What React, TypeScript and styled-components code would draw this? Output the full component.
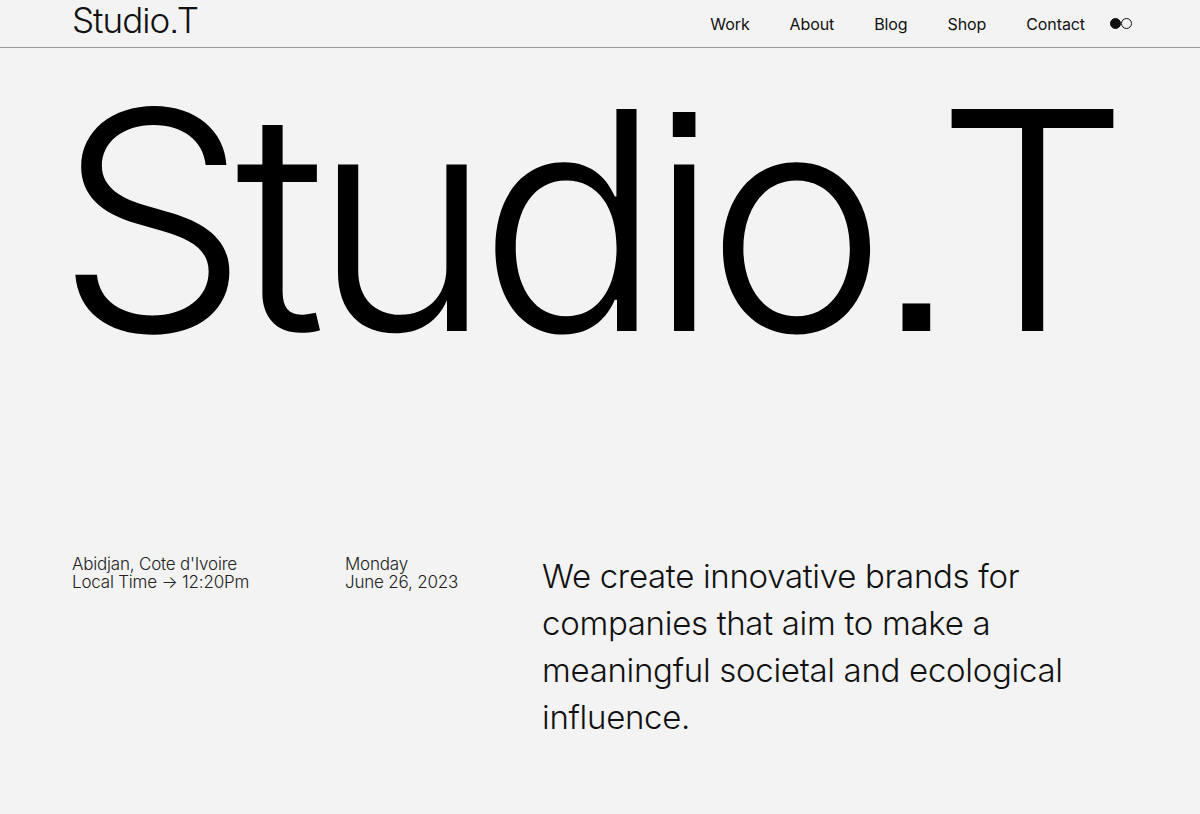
import { createGlobalStyle } from 'styled-components';
import styled from 'styled-components';

const GlobalStyle = createGlobalStyle`
  html, body {
    margin: 0;
    padding: 0;
    background: #f3f3f3;
    color: #0d0d0d;
    font-family: Inter, 'Liberation Sans', sans-serif;
  }
`;

const Page = styled.div`
  min-height: 814px;
  background: #f3f3f3;
`;

const Header = styled.header`
  display: flex;
  align-items: center;
  justify-content: space-between;
  height: 47px;
  padding: 0 68px 0 72px;
  border-bottom: 1px solid #9a9a9a;
`;

const Logo = styled.a`
  align-self: flex-start;
  padding-top: 5px;
  font-size: 35px;
  font-weight: 300;
  letter-spacing: -1px;
  line-height: 30px;
  color: #111;
  text-decoration: none;
  font-feature-settings: 'ss07';
`;

const Nav = styled.nav`
  display: flex;
  align-items: center;
  gap: 40px;
`;

const NavLink = styled.a`
  font-size: 16px;
  color: #111;
  text-decoration: none;
  letter-spacing: -0.1px;
`;

const Toggle = styled.span`
  display: flex;
  align-items: center;
  margin-left: -15px;
`;

const Dot = styled.span<{ $filled?: boolean }>`
  width: 11px;
  height: 11px;
  border-radius: 50%;
  box-sizing: border-box;
  border: 1.3px solid #111;
  background: ${(p) => (p.$filled ? '#111' : 'transparent')};
`;

const Hero = styled.h1`
  margin: 0;
  padding: 20px 0 0 56px;
  font-size: 305px;
  font-weight: 300;
  letter-spacing: -13.6px;
  line-height: 1;
  color: #000;
  white-space: nowrap;
  font-feature-settings: 'ss07';
`;

const Info = styled.section`
  display: grid;
  grid-template-columns: 273px 197px 1fr;
  padding: 182px 72px 0;
`;

const Meta = styled.p`
  margin: 0;
  font-size: 17px;
  font-weight: 300;
  line-height: 18px;
  color: #222;
  letter-spacing: -0.2px;
`;

const Statement = styled.p`
  margin: -2px 0 0;
  font-size: 33px;
  font-weight: 300;
  line-height: 47px;
  color: #111;
  letter-spacing: -0.3px;
  max-width: 545px;
`;

export default function App() {
  const links = ['Work', 'About', 'Blog', 'Shop', 'Contact'];
  return (
    <Page>
      <GlobalStyle />
      <Header>
        <Logo href="#">Studio.T</Logo>
        <Nav>
          {links.map((l) => (
            <NavLink key={l} href="#">
              {l}
            </NavLink>
          ))}
          <Toggle>
            <Dot $filled />
            <Dot />
          </Toggle>
        </Nav>
      </Header>
      <Hero>Studio.T</Hero>
      <Info>
        <Meta>
          Abidjan, Cote d'Ivoire
          <br />
          Local Time → 12:20Pm
        </Meta>
        <Meta>
          Monday
          <br />
          June 26, 2023
        </Meta>
        <Statement>
          We create innovative brands for companies that aim to make a meaningful societal and ecological influence.
        </Statement>
      </Info>
    </Page>
  );
}
